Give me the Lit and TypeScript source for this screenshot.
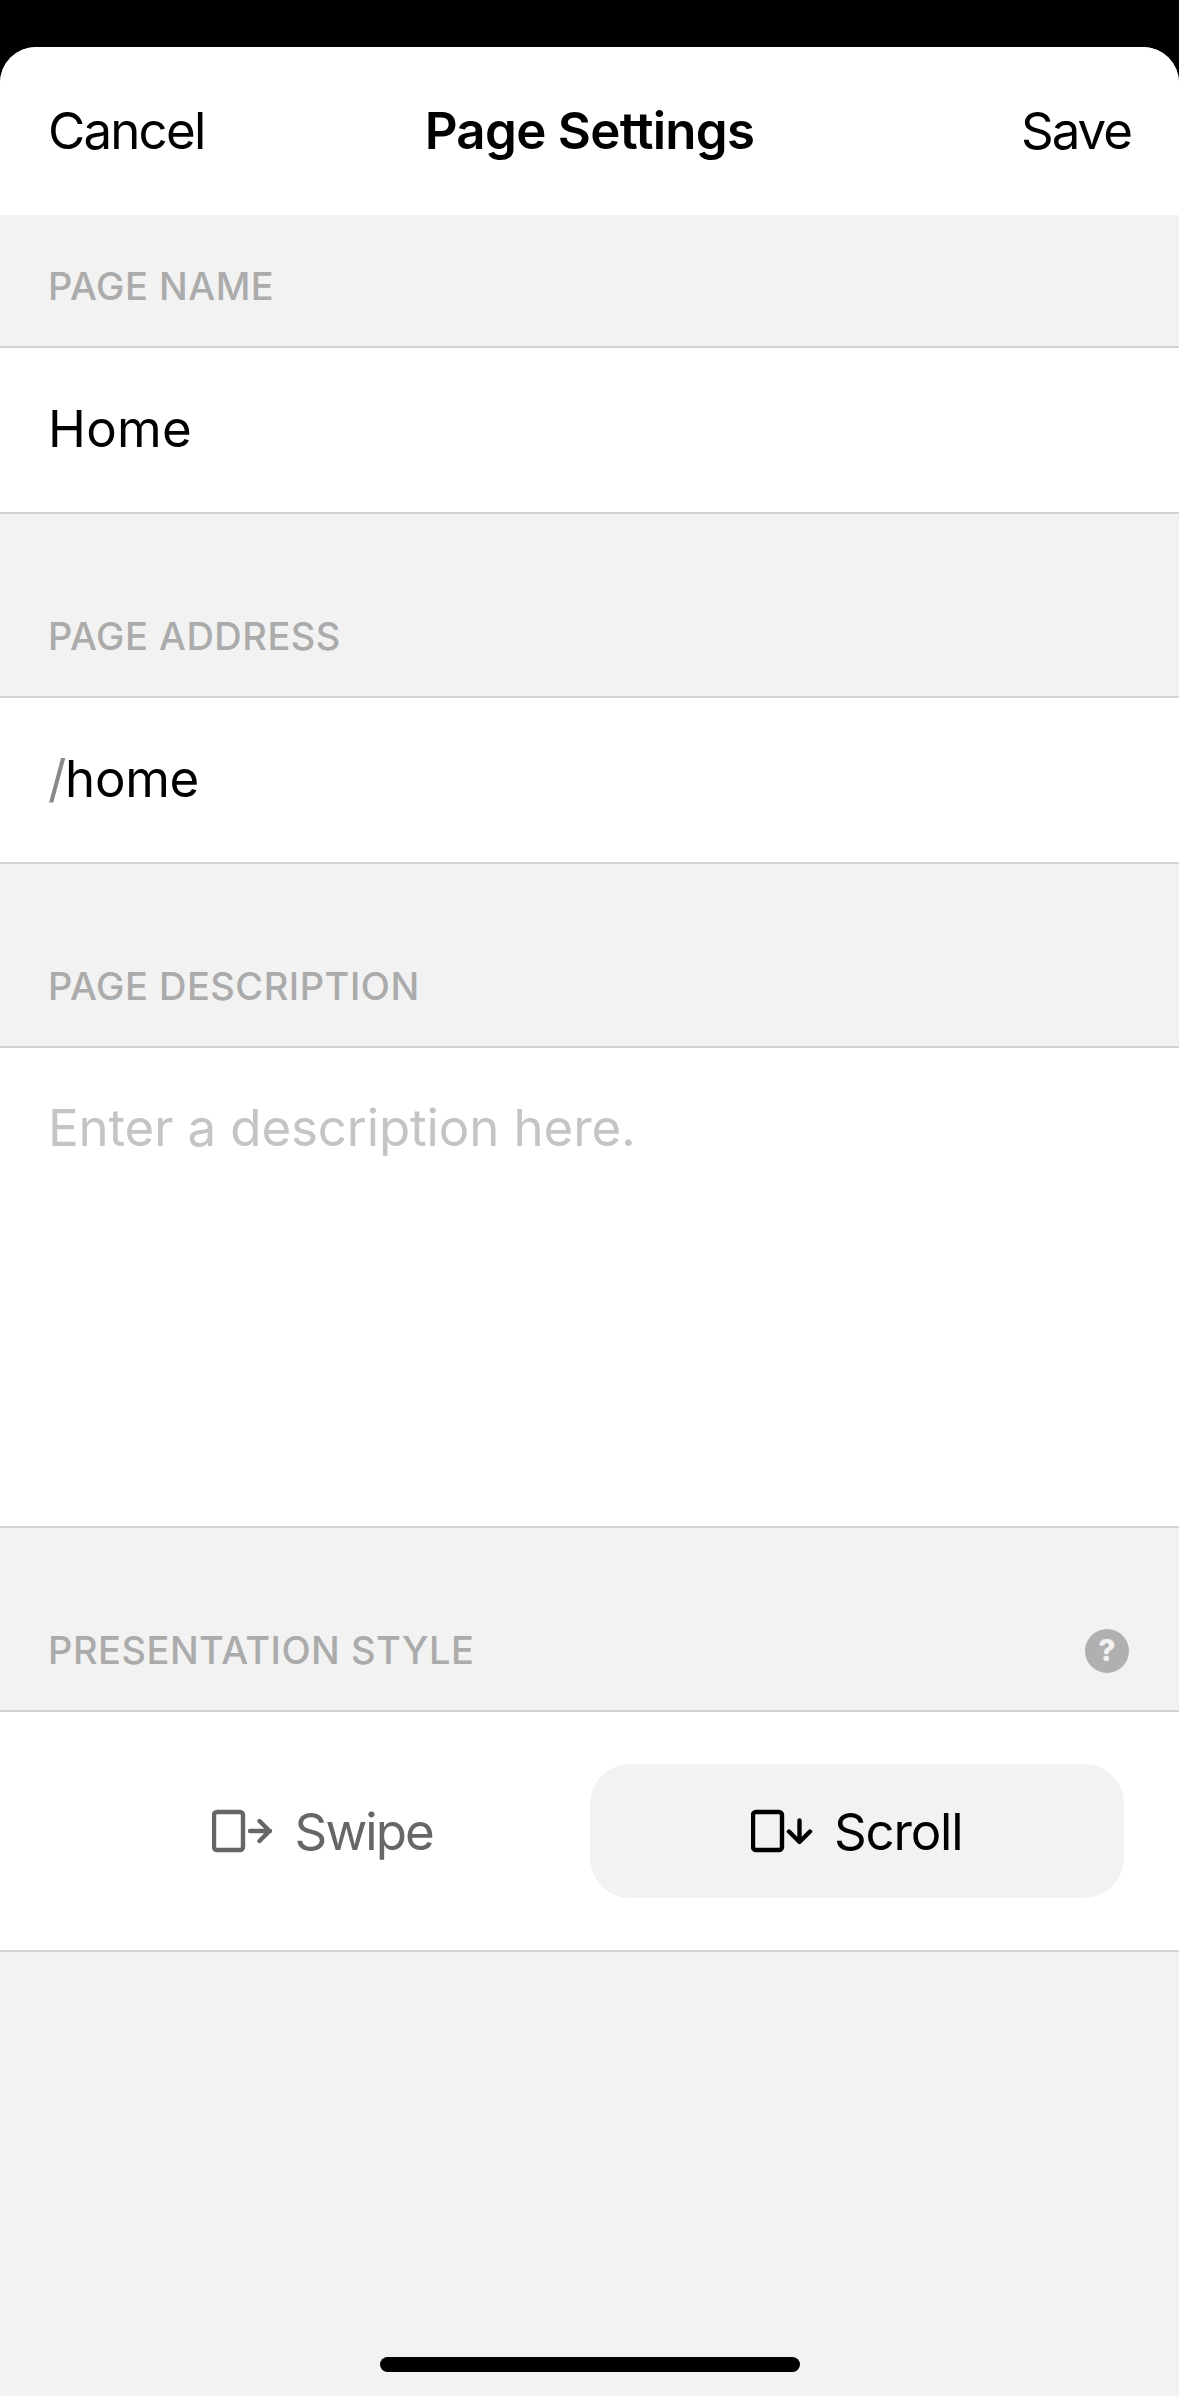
import { LitElement, html, css } from "lit";
import { customElement } from "lit/decorators.js";

@customElement("app-root")
export class AppRoot extends LitElement {
  static styles = css`
    :host { display: block; width: 1179px; height: 2396px; background: #000; font-family: Inter, "Noto Sans", sans-serif; overflow: hidden; }
    .sheet { height: 2349px; margin-top: 47px; background: #f2f2f2; border-radius: 36px 36px 0 0; overflow: hidden; display: flex; flex-direction: column; }
    .nav { height: 168px; flex: none; background: #fff; display: grid; grid-template-columns: 1fr auto 1fr; align-items: center; padding: 0 48px 1px 48px; font-size: 51px; color: #000; box-sizing: border-box; letter-spacing: -1.8px; }
    .title { font-weight: 600; letter-spacing: -0.7px; }
    .save { justify-self: end; letter-spacing: -2px; }
    .label { flex: none; box-sizing: border-box; display: flex; align-items: center; justify-content: space-between; padding: 100px 48px 37px; font-size: 38px; font-weight: 500; line-height: 45px; color: #ababab; height: 182px; letter-spacing: 0.5px; }
    .label.first { height: 131px; padding-top: 49px; }
    .row { flex: none; box-sizing: border-box; background: #fff; border-top: 2px solid #d2d2d2; border-bottom: 2px solid #d2d2d2; padding: 0 48px 3px; font-size: 51px; color: #000; display: flex; align-items: center; height: 168px; }
    .name { letter-spacing: 0.3px; }
    .slash { color: #888; margin-right: -1px; }
    .home { letter-spacing: -0.3px; }
    .desc { height: 482px; align-items: flex-start; padding-top: 50px; color: #c4c4c4; line-height: 60px; letter-spacing: -0.12px; }
    .help { width: 44px; height: 44px; border-radius: 50%; background: #b0b0b0; color: #f2f2f2; font-size: 30px; font-weight: 800; letter-spacing: 0; display: flex; align-items: center; justify-content: center; margin-right: 2px; }
    .choices { height: 242px; padding: 52px 55px 52px; align-items: stretch; }
    .choice { flex: 1; display: flex; align-items: center; justify-content: center; gap: 21px; border-radius: 40px; color: #666; font-size: 51px; letter-spacing: -1.9px; }
    .choice.on { background: #f2f2f2; color: #000; letter-spacing: -1.2px; }
    .choice svg { display: block; width: 62px; height: 46px; fill: none; stroke: currentColor; stroke-width: 4.4; stroke-linecap: round; stroke-linejoin: round; }
    .indicator { margin: auto auto 24px; width: 420px; height: 15px; border-radius: 8px; background: #000; flex: none; }
  `;

  render() {
    return html`
      <div class="sheet">
        <div class="nav"><span>Cancel</span><span class="title">Page Settings</span><span class="save">Save</span></div>
        <div class="label first">PAGE NAME</div>
        <div class="row name">Home</div>
        <div class="label">PAGE ADDRESS</div>
        <div class="row home"><span class="slash">/</span>home</div>
        <div class="label">PAGE DESCRIPTION</div>
        <div class="row desc">Enter a description here.</div>
        <div class="label"><span>PRESENTATION STYLE</span><span class="help">?</span></div>
        <div class="row choices">
          <div class="choice">
            <svg viewBox="0 0 62 46"><rect x="2" y="4" width="29" height="38" rx="3"></rect><path d="M38 23H58M47.500 13 57.500 23 47.500 33"></path></svg>
            <span>Swipe</span>
          </div>
          <div class="choice on">
            <svg viewBox="0 0 62 46"><rect x="2" y="4" width="29" height="38" rx="3"></rect><path d="M48.500 12.500V33.500M38 23.500 48.500 34 59 23.500"></path></svg>
            <span>Scroll</span>
          </div>
        </div>
        <div class="indicator"></div>
      </div>
    `;
  }
}
